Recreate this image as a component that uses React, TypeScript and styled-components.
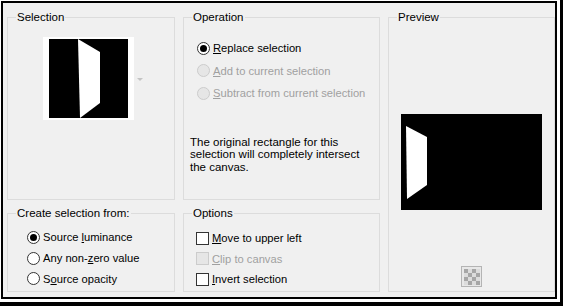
import React from "react";
import styled, { createGlobalStyle } from "styled-components";

const Global = createGlobalStyle`
  html, body { margin: 0; padding: 0; background: #ffffff; }
  body { width: 563px; height: 306px; overflow: hidden; }
  #root { width: 563px; }
`;

const Shadow = styled.div`
  box-sizing: border-box;
  width: 563px;
  height: 306px;
  padding: 1px 3px 3px 1px;
  border-right: 3px solid #000;
  border-bottom: 4px solid #000;
  background: #fff;
`;

const Frame = styled.div`
  box-sizing: border-box;
  width: 556px;
  height: 298px;
  border: 2px solid #000;
  background: #f0f0f0;
  padding: 14px 0 5px 4px;
  display: grid;
  grid-template-columns: 168px 197px 167px;
  grid-template-rows: 183px 79px;
  column-gap: 8px;
  row-gap: 13px;
  font-family: "Liberation Sans", Arial, sans-serif;
  font-size: 11px;
  color: #000;
`;

const Group = styled.div<{ $col: number; $row: string }>`
  position: relative;
  box-sizing: border-box;
  border: 1px solid #dcdcdc;
  grid-column: ${(p) => p.$col};
  grid-row: ${(p) => p.$row};
`;

const Legend = styled.span`
  position: absolute;
  top: -7px;
  left: 8px;
  padding: 0 1px;
  background: #f0f0f0;
  line-height: 13px;
  font-size: 11.5px;
  white-space: nowrap;
`;

const SelectionBody = styled.div`
  display: flex;
  align-items: center;
  padding: 19px 0 0 35px;
  gap: 3px;
`;

const Thumb = styled.div`
  background: #fff;
  padding: 2px 6px 2px 6px;
  display: flex;
`;

const DropArrow = styled.span`
  width: 0;
  height: 0;
  border-left: 3px solid transparent;
  border-right: 3px solid transparent;
  border-top: 3px solid #c4c4c4;
  margin-top: 2px;
`;

const List = styled.div<{ $top: number; $left: number; $row: number }>`
  display: flex;
  flex-direction: column;
  padding: ${(p) => p.$top}px 0 0 ${(p) => p.$left}px;
  & > * { height: ${(p) => p.$row}px; }
`;

const Row = styled.label<{ $disabled?: boolean }>`
  display: flex;
  align-items: center;
  gap: 3px;
  font-size: 11.2px;
  white-space: nowrap;
  color: ${(p) => (p.$disabled ? "#a0a0a0" : "#000")};
  u { text-decoration: underline; text-underline-offset: 1px; }
`;

const RadioCircle = styled.span<{ $checked?: boolean; $disabled?: boolean }>`
  box-sizing: border-box;
  width: 13px;
  height: 13px;
  border-radius: 50%;
  flex: none;
  border: 1px solid ${(p) => (p.$disabled ? "#cccccc" : "#333333")};
  background: ${(p) => (p.$disabled ? "#e6e6e6" : "#ffffff")};
  display: flex;
  align-items: center;
  justify-content: center;
  &::after {
    content: "";
    width: 7px;
    height: 7px;
    border-radius: 50%;
    background: #000;
    display: ${(p) => (p.$checked ? "block" : "none")};
  }
`;

const CheckBox = styled.span<{ $disabled?: boolean }>`
  box-sizing: border-box;
  width: 13px;
  height: 13px;
  flex: none;
  border: 1px solid ${(p) => (p.$disabled ? "#cccccc" : "#333333")};
  background: ${(p) => (p.$disabled ? "#e6e6e6" : "#ffffff")};
`;

const Note = styled.p`
  margin: 0;
  padding: 0 6px;
  font-size: 11.5px;
  line-height: 12.5px;
  width: 185px;
`;

const OperationBody = styled.div`
  display: flex;
  flex-direction: column;
  gap: 31px;
`;

const PreviewBody = styled.div`
  display: flex;
  flex-direction: column;
  align-items: center;
  padding-top: 96px;
  gap: 56px;
`;

const PreviewBox = styled.div`
  display: flex;
`;

const Radio = ({
  label,
  checked,
  disabled,
}: {
  label: React.ReactNode;
  checked?: boolean;
  disabled?: boolean;
}) => (
  <Row $disabled={disabled}>
    <RadioCircle $checked={checked} $disabled={disabled} />
    <span>{label}</span>
  </Row>
);

const Check = ({ label, disabled }: { label: React.ReactNode; disabled?: boolean }) => (
  <Row $disabled={disabled}>
    <CheckBox $disabled={disabled} />
    <span>{label}</span>
  </Row>
);

const Checker = () => (
  <svg width="21" height="21" viewBox="0 0 21 21">
    <rect x="0.5" y="0.5" width="20" height="20" fill="#e8e8e8" stroke="#b4b4b4" />
    {Array.from({ length: 16 }).map((_, i) => {
      const cx = i % 4;
      const cy = Math.floor(i / 4);
      const dark = (cx + cy) % 2 === 0;
      return (
        <rect
          key={i}
          x={3 + cx * 4}
          y={3 + cy * 4}
          width={4}
          height={4}
          fill={dark ? "#a6a6a6" : "#dcdcdc"}
        />
      );
    })}
  </svg>
);

export default function App() {
  return (
    <>
      <Global />
      <Shadow>
        <Frame>
          <Group $col={1} $row="1">
            <Legend>Selection</Legend>
            <SelectionBody>
              <Thumb>
                <svg width="79" height="79" viewBox="0 0 79 79">
                  <rect width="79" height="79" fill="#000" />
                  <polygon points="29,0 51,13 51,64 31,79" fill="#fff" />
                </svg>
              </Thumb>
              <DropArrow />
            </SelectionBody>
          </Group>

          <Group $col={2} $row="1">
            <Legend>Operation</Legend>
            <OperationBody>
              <List $top={19} $left={13} $row={22.5}>
                <Radio checked label={<><u>R</u>eplace selection</>} />
                <Radio disabled label={<><u>A</u>dd to current selection</>} />
                <Radio disabled label={<><u>S</u>ubtract from current selection</>} />
              </List>
              <Note>
                The original rectangle for this selection will completely intersect the canvas.
              </Note>
            </OperationBody>
          </Group>

          <Group $col={3} $row="1 / span 2">
            <Legend>Preview</Legend>
            <PreviewBody>
              <PreviewBox>
                <svg width="141" height="96" viewBox="0 0 141 96">
                  <rect width="141" height="96" fill="#000" />
                  <polygon points="5,12 26,23 26,71 6,85" fill="#fff" />
                </svg>
              </PreviewBox>
              <Checker />
            </PreviewBody>
          </Group>

          <Group $col={1} $row="2">
            <Legend>Create selection from:</Legend>
            <List $top={13} $left={19} $row={20.8}>
              <Radio checked label={<>Source <u>l</u>uminance</>} />
              <Radio label={<>Any non-<u>z</u>ero value</>} />
              <Radio label={<>S<u>o</u>urce opacity</>} />
            </List>
          </Group>

          <Group $col={2} $row="2">
            <Legend>Options</Legend>
            <List $top={14} $left={12} $row={20.5}>
              <Check label={<><u>M</u>ove to upper left</>} />
              <Check disabled label={<><u>C</u>lip to canvas</>} />
              <Check label={<><u>I</u>nvert selection</>} />
            </List>
          </Group>
        </Frame>
      </Shadow>
    </>
  );
}
